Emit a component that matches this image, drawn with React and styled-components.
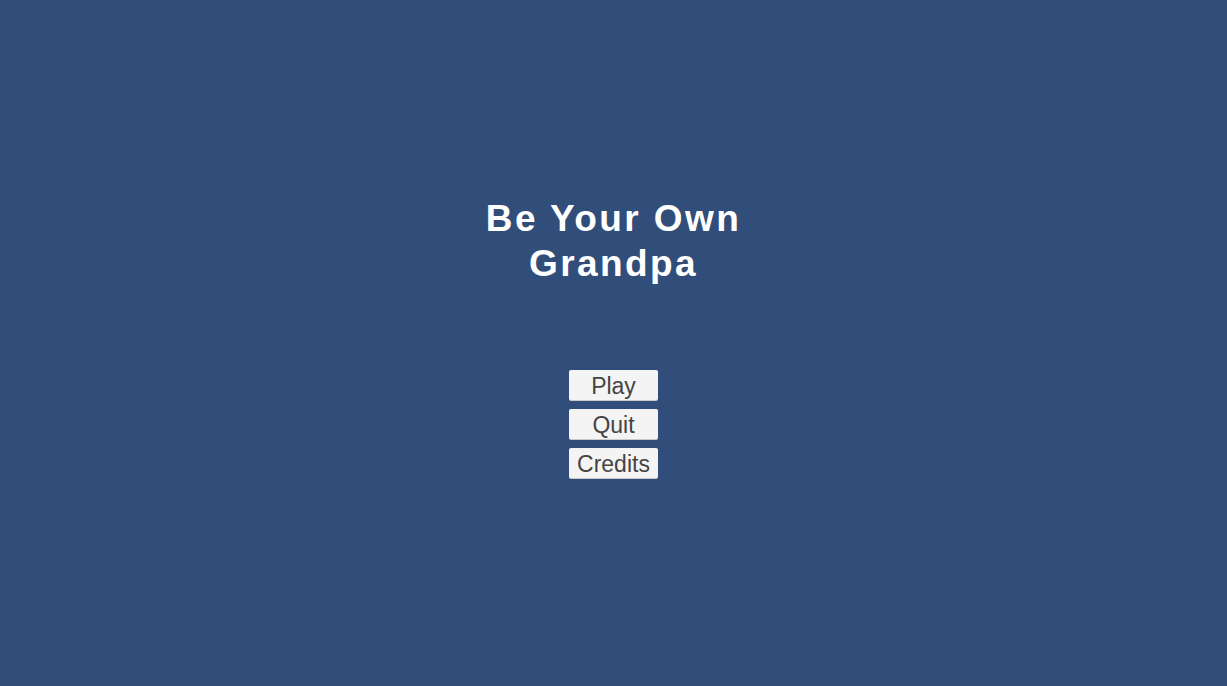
import React from 'react'
import styled, { createGlobalStyle } from 'styled-components'

const GlobalStyle = createGlobalStyle`
    html, body {
        margin: 0;
        padding: 0;
        background: #314d7a;
    }
`

function App() {
    const items = ['Play', 'Quit', 'Credits']

    return (
        <MenuStyled>
            <GlobalStyle />
            <h1>
                Be Your Own
                <br />
                Grandpa
            </h1>
            <div className="buttons">
                {items.map(label => (
                    <MenuButton key={label}>{label}</MenuButton>
                ))}
            </div>
        </MenuStyled>
    )
}

const MenuStyled = styled.div`
    width: 100%;
    height: 686px;
    background: #314d7a;
    display: flex;
    flex-direction: column;
    align-items: center;
    font-family: "Liberation Sans", Arial, sans-serif;
    overflow: hidden;

    h1{
        margin: 196px 0 0;
        color: #ffffff;
        font-size: 37px;
        font-weight: bold;
        line-height: 45px;
        letter-spacing: 2.4px;
        text-align: center;
    }

    .buttons{
        margin-top: 84px;
        display: flex;
        flex-direction: column;
        gap: 9px;
    }
`;

const MenuButton = styled.button`
    width: 89px;
    height: 30px;
    padding: 2px 0 0;
    border: none;
    border-radius: 2px;
    background: #f4f4f4;
    box-shadow: 0 1px 0 #c9c9c9;
    color: #444444;
    font-family: "Liberation Sans", Arial, sans-serif;
    font-size: 23px;
    line-height: 28px;
    cursor: pointer;
`;

export default App
